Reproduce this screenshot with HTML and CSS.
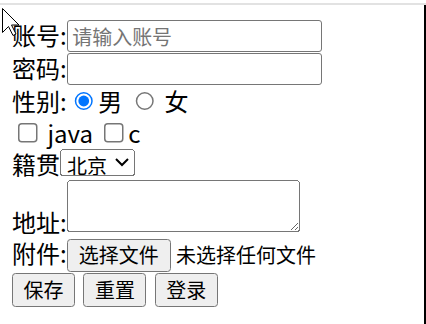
FILE: index.html
```html
<!DOCTYPE html>
<html lang="zh-CN">
<head>
    <meta charset="UTF-8">
    <title>注册</title>
    <link rel="stylesheet" href="styles.css">
</head>
<body>
    <div class="topline"></div>
    <div class="screen">
        <form class="form">
            <div class="row">账号:<input class="text" type="text" placeholder="请输入账号"></div>
            <div class="row">密码:<input class="text" type="password"></div>
            <div class="row">性别:<input type="radio" name="sex" checked>男 <input type="radio" name="sex"> 女</div>
            <div class="row"><input type="checkbox"> java <input type="checkbox">c</div>
            <div class="row">籍贯<select class="city"><option>北京</option></select></div>
            <div class="row">地址:<textarea class="addr"></textarea></div>
            <div class="row">附件:<button type="button" class="btn file-btn">选择文件</button> <span class="file-name">未选择任何文件</span></div>
            <div class="row actions"><button type="submit" class="btn">保存</button> <button type="reset" class="btn">重置</button> <button type="button" class="btn">登录</button></div>
        </form>

        <!-- mouse pointer left over the page -->
        <svg class="cursor" width="20" height="30" viewBox="0 0 20 30">
            <path d="M1.5 1.5 L1.5 25.5 L7.5 19.5 L12 28.5 L15 27 L10.5 18 L18 18 Z" fill="#fff" stroke="#000" stroke-width="1"/>
        </svg>
    </div>
</body>
</html>
```

FILE: styles.css
```css
body {
    margin: 0;
    background: #fff;
    overflow: hidden;
}

.topline {
    height: 2px;
    margin-top: 3px;
    background: #e2e2e2;
}

.screen {
    position: relative;
    height: 319px;
    box-sizing: border-box;
    border-right: 2px solid #000;
}

/* page was captured at 150% zoom */
.form {
    zoom: 1.5;
    margin: 0;
    padding: 9px 8px 0;
    font-family: "Noto Sans CJK SC", sans-serif;
    font-size: 16px;
    line-height: 21px;
    color: #000;
}

.row {
    white-space: nowrap;
}

.actions {
    word-spacing: 2px;
}

input, select, textarea, button {
    font-family: "Noto Sans CJK SC", sans-serif;
    font-size: 13.33px;
}

.text {
    width: 170px;
    height: 21.33px;
    box-sizing: border-box;
    padding: 1px 3px;
    border: 1px solid #767676;
    border-radius: 2px;
}

.text::placeholder {
    color: #757575;
}

.city {
    width: 50px;
    height: 18px;
    box-sizing: border-box;
}

.addr {
    width: 155.33px;
    height: 34.67px;
    box-sizing: border-box;
}

.btn {
    width: 42px;
    height: 22.67px;
    box-sizing: border-box;
    padding: 0;
    line-height: 1;
    word-spacing: normal;
}

.file-btn {
    width: 69.33px;
    height: 22px;
}

.file-name {
    font-size: 13.33px;
}

.cursor {
    position: absolute;
    left: 1px;
    top: 2px;
}
```
